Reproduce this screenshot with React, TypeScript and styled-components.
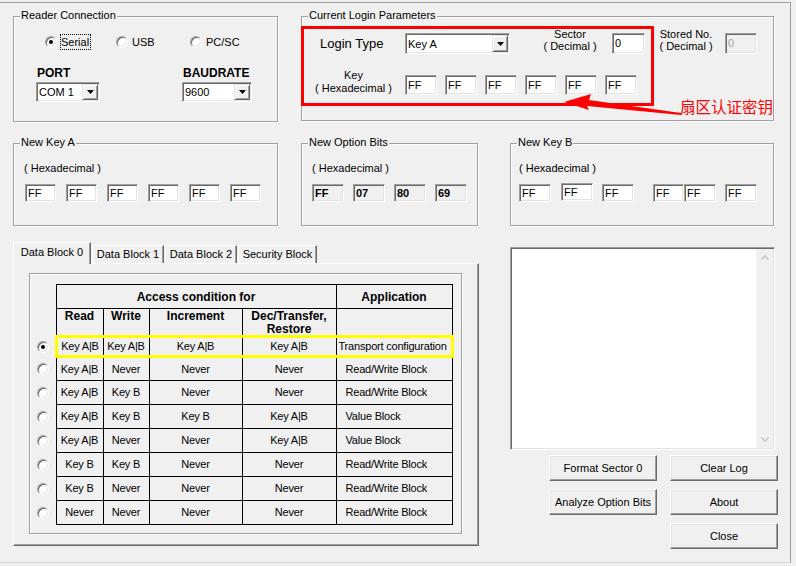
import React from "react";
import styled, { createGlobalStyle, css } from "styled-components";

const GlobalStyle = createGlobalStyle`
  html, body { margin: 0; padding: 0; background: #f0f0f0; }
  body { font-family: "Liberation Sans", Arial, sans-serif; font-size: 11px; color: #000; }
  *, *::before, *::after { box-sizing: border-box; }
`;

const Page = styled.div`
  width: 796px;
  height: 566px;
  padding-top: 2px;
  background: #f0f0f0;
  overflow: hidden;
`;

const Frame = styled.div`
  width: 791px;
  height: 561px;
  border-top: 1px solid #a0a0a0;
  border-right: 1px solid #a0a0a0;
  border-bottom: 1px solid #d8d8d8;
  padding: 13px 0 0 13px;
`;

const Row = styled.div<{ $mt?: number }>`
  display: flex;
  align-items: flex-start;
  margin-top: ${(p) => p.$mt ?? 0}px;
`;

const Group = styled.div<{ $w: number; $h: number; $ml?: number; $pl?: number }>`
  position: relative;
  flex: none;
  width: ${(p) => p.$w}px;
  height: ${(p) => p.$h}px;
  margin-left: ${(p) => p.$ml ?? 0}px;
  padding-left: ${(p) => p.$pl ?? 0}px;
  border: 1px solid #a0a0a0;
  box-shadow: inset 1px 1px 0 #fff, 1px 1px 0 #fff;
`;

const GroupTitle = styled.span`
  position: absolute;
  left: 6px;
  top: -8px;
  padding: 0 1px;
  background: #f0f0f0;
  line-height: 13px;
  white-space: nowrap;
`;

/* ---------- shared controls ---------- */

const TextBox = styled.div<{
  $w: number;
  $h: number;
  $ml?: number;
  $mt?: number;
  $disabled?: boolean;
  $bold?: boolean;
}>`
  flex: none;
  width: ${(p) => p.$w}px;
  height: ${(p) => p.$h}px;
  margin-left: ${(p) => p.$ml ?? 0}px;
  margin-top: ${(p) => p.$mt ?? 0}px;
  border: 1px solid;
  border-color: #a0a0a0 #fff #fff #a0a0a0;
  box-shadow: inset 1px 1px 0 #696969, inset -1px -1px 0 #e3e3e3;
  background: ${(p) => (p.$disabled ? "#f0f0f0" : "#fff")};
  color: ${(p) => (p.$disabled && !p.$bold ? "#a0a0a0" : "#000")};
  font-weight: ${(p) => (p.$bold ? 700 : 400)};
  padding-left: 2px;
  line-height: ${(p) => p.$h - 2}px;
  white-space: nowrap;
  overflow: hidden;
`;

const ComboBox = styled.div<{ $w: number; $h: number; $mt?: number }>`
  flex: none;
  display: flex;
  width: ${(p) => p.$w}px;
  height: ${(p) => p.$h}px;
  margin-top: ${(p) => p.$mt ?? 0}px;
  border: 1px solid;
  border-color: #a0a0a0 #fff #fff #a0a0a0;
  box-shadow: inset 1px 1px 0 #696969, inset -1px -1px 0 #e3e3e3;
  background: #fff;
  padding: 1px;
`;

const ComboValue = styled.span`
  flex: 1;
  padding-left: 1px;
  display: flex;
  align-items: center;
  white-space: nowrap;
`;

const DropButton = styled.span`
  flex: none;
  width: 16px;
  display: flex;
  align-items: center;
  justify-content: center;
  background: #f0f0f0;
  border: 1px solid;
  border-color: #e3e3e3 #696969 #696969 #e3e3e3;
  box-shadow: inset 1px 1px 0 #fff, inset -1px -1px 0 #a0a0a0;
`;

const Combo: React.FC<{ w: number; h: number; mt?: number; children: React.ReactNode }> = ({
  w,
  h,
  mt,
  children,
}) => (
  <ComboBox $w={w} $h={h} $mt={mt}>
    <ComboValue>{children}</ComboValue>
    <DropButton>
      <svg width="7" height="4" viewBox="0 0 7 4">
        <polygon points="0,0 7,0 3.5,4" fill="#000" />
      </svg>
    </DropButton>
  </ComboBox>
);

const RadioDot = styled.span<{ $checked?: boolean }>`
  display: block;
  position: relative;
  flex: none;
  width: 12px;
  height: 12px;
  border-radius: 50%;
  background: #fff;
  border: 1px solid;
  border-color: #a0a0a0 #fff #fff #a0a0a0;
  box-shadow: inset 1px 1px 0 #696969, inset -1px -1px 0 #e3e3e3;
  ${(p) =>
    p.$checked &&
    css`
      &::after {
        content: "";
        position: absolute;
        left: 3px;
        top: 3px;
        width: 4px;
        height: 4px;
        border-radius: 50%;
        background: #000;
      }
    `}
`;

/* ---------- reader connection ---------- */

const RadioRow = styled.div`
  display: flex;
  align-items: center;
  height: 17px;
  margin-top: 16px;
  padding-left: 31px;
`;

const RadioOption = styled.label<{ $w?: number }>`
  display: flex;
  align-items: center;
  gap: 3px;
  width: ${(p) => (p.$w ? `${p.$w}px` : "auto")};
`;

const OptionText = styled.span<{ $focused?: boolean }>`
  border: 1px dotted ${(p) => (p.$focused ? "#000" : "transparent")};
  line-height: 13px;
  padding: 1px 1px 0 0;
`;

const PortRow = styled.div`
  display: flex;
  margin-top: 16px;
  padding-left: 22px;
`;

const Field = styled.div<{ $w?: number }>`
  display: flex;
  flex-direction: column;
  align-items: flex-start;
  width: ${(p) => (p.$w ? `${p.$w}px` : "auto")};
`;

const BoldLabel = styled.span`
  font-size: 12px;
  font-weight: 700;
  line-height: 14px;
  margin: 0 0 2px 1px;
`;

/* ---------- login parameters ---------- */

const LoginRow = styled.div`
  display: flex;
  align-items: flex-start;
  height: 26px;
  margin-top: 11px;
`;

const LoginLabel = styled.span`
  flex: none;
  width: 103px;
  padding-left: 18px;
  margin-top: 8px;
  font-size: 13px;
  line-height: 16px;
`;

const StackLabel = styled.span<{ $w: number; $ml?: number; $lh?: number }>`
  flex: none;
  width: ${(p) => p.$w}px;
  margin-left: ${(p) => p.$ml ?? 0}px;
  text-align: center;
  line-height: ${(p) => p.$lh ?? 12}px;
  white-space: nowrap;
`;

const KeyRow = styled.div`
  display: flex;
  align-items: flex-end;
  margin-top: 15px;
`;

const RedFrame = styled.div`
  position: absolute;
  left: -1px;
  top: 9px;
  width: 353px;
  height: 80px;
  border: 3px solid #ff0000;
  pointer-events: none;
`;

const ArrowMark = styled.svg`
  position: absolute;
  left: 258px;
  top: 73px;
  overflow: visible;
  pointer-events: none;
`;

const Annotation = styled.span`
  position: absolute;
  left: 378px;
  top: 81px;
  color: #ff0000;
  font-family: "Noto Sans CJK SC", "Liberation Sans", sans-serif;
  font-size: 15.5px;
  line-height: 16px;
  white-space: nowrap;
`;

/* ---------- option rows ---------- */

const HexCaption = styled.div`
  margin-top: 18px;
  line-height: 13px;
  white-space: nowrap;
`;

const BoxRow = styled.div<{ $ml?: number }>`
  display: flex;
  align-items: flex-start;
  margin-top: 9px;
  margin-left: ${(p) => p.$ml ?? 0}px;
`;

/* ---------- tabs ---------- */

const TabControl = styled.div`
  flex: none;
  width: 466px;
`;

const TabStrip = styled.div`
  display: flex;
  align-items: flex-end;
  height: 21px;
`;

const Tab = styled.div<{ $active?: boolean; $w: number }>`
  position: relative;
  z-index: ${(p) => (p.$active ? 2 : 1)};
  flex: none;
  width: ${(p) => p.$w}px;
  height: ${(p) => (p.$active ? 22 : 18)}px;
  margin-left: ${(p) => (p.$active ? 0 : 1)}px;
  margin-bottom: ${(p) => (p.$active ? -1 : 0)}px;
  padding-top: ${(p) => (p.$active ? 3 : 2)}px;
  background: #f0f0f0;
  border: 1px solid;
  border-bottom: none;
  border-color: #fff #696969 transparent #fff;
  box-shadow: inset -1px 0 0 #a0a0a0;
  text-align: center;
  line-height: 13px;
  white-space: nowrap;
`;

const TabPanel = styled.div`
  position: relative;
  z-index: 1;
  width: 466px;
  height: 283px;
  border: 1px solid;
  border-color: #fff #696969 #696969 #fff;
  box-shadow: inset -1px -1px 0 #a0a0a0;
  padding: 9px 0 0 15px;
`;

const InnerFrame = styled.div`
  width: 433px;
  height: 261px;
  border: 1px solid #a0a0a0;
  box-shadow: inset 1px 1px 0 #fff, 1px 1px 0 #fff;
  padding: 10px 0 0 6px;
`;

const AccessTable = styled.table`
  border-collapse: collapse;
  table-layout: fixed;
  width: 416px;
`;

const Col = styled.col<{ $w: number }>`
  width: ${(p) => p.$w}px;
`;

const HeadRow = styled.tr<{ $h: number }>`
  height: ${(p) => p.$h}px;
`;

const HeadCell = styled.th<{ $top?: boolean }>`
  border: 1px solid #000;
  padding: 0;
  font-size: 12px;
  font-weight: 700;
  line-height: 12px;
  text-align: center;
  vertical-align: ${(p) => (p.$top ? "top" : "middle")};
  white-space: nowrap;
`;

const HeadLine = styled.span`
  display: block;
  height: 12px;
  margin-top: 1px;
`;

const RadioCell = styled.td`
  border: none;
  padding: 0 0 0 1px;
  vertical-align: middle;
`;

const Cell = styled.td<{ $left?: number }>`
  border: 1px solid #000;
  padding: 0 0 0 ${(p) => p.$left ?? 0}px;
  text-align: ${(p) => (p.$left !== undefined ? "left" : "center")};
  vertical-align: middle;
  white-space: nowrap;
  overflow: hidden;
  letter-spacing: -0.2px;
  line-height: 13px;
`;

const DataRow = styled.tr<{ $h: number; $hl?: boolean }>`
  height: ${(p) => p.$h}px;
  ${(p) =>
    p.$hl &&
    css`
      & > td:not(:first-child) {
        border-top: 3px solid #ffff00;
        border-bottom: 3px solid #ffff00;
      }
      & > td:nth-child(2) {
        border-left: 3px solid #ffff00;
      }
      & > td:last-child {
        border-right: 3px solid #ffff00;
      }
    `}
`;

/* ---------- side column ---------- */

const SideColumn = styled.div`
  flex: none;
  width: 268px;
  margin-left: 31px;
`;

const LogBox = styled.div`
  display: flex;
  width: 265px;
  height: 203px;
  margin-top: 5px;
  border: 1px solid;
  border-color: #a0a0a0 #fff #fff #a0a0a0;
  box-shadow: inset 1px 1px 0 #696969, inset -1px -1px 0 #e3e3e3;
  background: #fff;
  padding: 1px;
`;

const LogText = styled.div`
  flex: 1;
`;

const ScrollTrack = styled.div`
  flex: none;
  width: 17px;
  background: #f0f0f0;
  display: flex;
  flex-direction: column;
  justify-content: space-between;
`;

const ScrollArrow = styled.div`
  height: 17px;
  display: flex;
  align-items: center;
  justify-content: center;
`;

const ButtonGrid = styled.div`
  display: grid;
  grid-template-columns: 108px 108px;
  column-gap: 13px;
  row-gap: 8px;
  justify-content: end;
  margin-top: 5px;
`;

const Button = styled.button<{ $col?: number }>`
  grid-column: ${(p) => p.$col ?? "auto"};
  height: 26px;
  margin: 0;
  padding: 0;
  font: inherit;
  color: #000;
  background: #f0f0f0;
  border: 1px solid;
  border-color: #fff #696969 #696969 #fff;
  box-shadow: inset -1px -1px 0 #a0a0a0, inset 1px 1px 0 #e3e3e3;
  white-space: nowrap;
`;

/* ---------- data ---------- */

const rows: string[][] = [
  ["Key A|B", "Key A|B", "Key A|B", "Key A|B", "Transport configuration"],
  ["Key A|B", "Never", "Never", "Never", "Read/Write Block"],
  ["Key A|B", "Key B", "Never", "Never", "Read/Write Block"],
  ["Key A|B", "Key B", "Key B", "Key A|B", "Value Block"],
  ["Key A|B", "Never", "Never", "Key A|B", "Value Block"],
  ["Key B", "Key B", "Never", "Never", "Read/Write Block"],
  ["Key B", "Never", "Never", "Never", "Read/Write Block"],
  ["Never", "Never", "Never", "Never", "Read/Write Block"],
];

const keyB = [
  { w: 32, ml: 0, mt: 0 },
  { w: 32, ml: 10, mt: -1 },
  { w: 32, ml: 9, mt: 0 },
  { w: 31, ml: 19, mt: 0 },
  { w: 32, ml: 0, mt: 0 },
  { w: 32, ml: 9, mt: 0 },
];

const optionBits = ["FF", "07", "80", "69"];

const Chevron: React.FC<{ up?: boolean }> = ({ up }) => (
  <svg width="8" height="5" viewBox="0 0 8 5">
    <polyline
      points={up ? "0.5,4.5 4,1 7.5,4.5" : "0.5,0.5 4,4 7.5,0.5"}
      fill="none"
      stroke="#c4c4c4"
      strokeWidth="1.4"
    />
  </svg>
);

export default function App() {
  return (
    <Page>
      <GlobalStyle />
      <Frame>
        <Row>
          <Group $w={265} $h={106}>
            <GroupTitle>Reader Connection</GroupTitle>
            <RadioRow>
              <RadioOption $w={71}>
                <RadioDot $checked />
                <OptionText $focused>Serial</OptionText>
              </RadioOption>
              <RadioOption $w={74}>
                <RadioDot />
                <OptionText>USB</OptionText>
              </RadioOption>
              <RadioOption>
                <RadioDot />
                <OptionText>PC/SC</OptionText>
              </RadioOption>
            </RadioRow>
            <PortRow>
              <Field $w={146}>
                <BoldLabel>PORT</BoldLabel>
                <Combo w={64} h={20}>COM 1</Combo>
              </Field>
              <Field>
                <BoldLabel>BAUDRATE</BoldLabel>
                <Combo w={70} h={20}>9600</Combo>
              </Field>
            </PortRow>
          </Group>

          <Group $w={473} $h={105} $ml={23}>
            <GroupTitle>Current Login Parameters</GroupTitle>
            <LoginRow>
              <LoginLabel>Login Type</LoginLabel>
              <Combo w={105} h={21} mt={5}>Key A</Combo>
              <StackLabel $w={84} $ml={18}>
                Sector
                <br />( Decimal )
              </StackLabel>
              <TextBox $w={33} $h={21} $mt={5}>0</TextBox>
              <StackLabel $w={78} $ml={2}>
                Stored No.
                <br />( Decimal )
              </StackLabel>
              <TextBox $w={32} $h={21} $mt={5} $disabled>0</TextBox>
            </LoginRow>
            <KeyRow>
              <StackLabel $w={103} $lh={13}>
                Key
                <br />( Hexadecimal )
              </StackLabel>
              {[0, 1, 2, 3, 4, 5].map((i) => (
                <TextBox key={i} $w={32} $h={20} $ml={i ? 8 : 0}>FF</TextBox>
              ))}
            </KeyRow>
            <RedFrame />
            <ArrowMark width="124" height="26" viewBox="0 0 124 26">
              <polygon
                points="4,12 31,4 29,10 121,23 121,25 27,16 29,20"
                fill="#ff0000"
              />
            </ArrowMark>
            <Annotation>扇区认证密钥</Annotation>
          </Group>
        </Row>

        <Row $mt={21}>
          <Group $w={265} $h={83} $pl={10}>
            <GroupTitle>New Key A</GroupTitle>
            <HexCaption>( Hexadecimal )</HexCaption>
            <BoxRow $ml={1}>
              {[0, 1, 2, 3, 4, 5].map((i) => (
                <TextBox key={i} $w={31} $h={18} $ml={i ? 10 : 0}>FF</TextBox>
              ))}
            </BoxRow>
          </Group>

          <Group $w={177} $h={83} $ml={23} $pl={10}>
            <GroupTitle>New Option Bits</GroupTitle>
            <HexCaption>( Hexadecimal )</HexCaption>
            <BoxRow>
              {optionBits.map((v, i) => (
                <TextBox key={v} $w={32} $h={18} $ml={i ? 9 : 0} $disabled $bold>
                  {v}
                </TextBox>
              ))}
            </BoxRow>
          </Group>

          <Group $w={264} $h={83} $ml={32} $pl={8}>
            <GroupTitle>New Key B</GroupTitle>
            <HexCaption>( Hexadecimal )</HexCaption>
            <BoxRow>
              {keyB.map((b, i) => (
                <TextBox key={i} $w={b.w} $h={18} $ml={b.ml} $mt={b.mt}>FF</TextBox>
              ))}
            </BoxRow>
          </Group>
        </Row>

        <Row $mt={16}>
          <TabControl>
            <TabStrip>
              <Tab $active $w={78}>Data Block 0</Tab>
              <Tab $w={72}>Data Block 1</Tab>
              <Tab $w={72}>Data Block 2</Tab>
              <Tab $w={79}>Security Block</Tab>
            </TabStrip>
            <TabPanel>
              <InnerFrame>
                <AccessTable>
                  <colgroup>
                    <Col $w={20} />
                    <Col $w={47} />
                    <Col $w={46} />
                    <Col $w={93} />
                    <Col $w={94} />
                    <Col $w={116} />
                  </colgroup>
                  <thead>
                    <HeadRow $h={24}>
                      <RadioCell />
                      <HeadCell colSpan={4}>Access condition for</HeadCell>
                      <HeadCell>Application</HeadCell>
                    </HeadRow>
                    <HeadRow $h={26}>
                      <RadioCell />
                      <HeadCell $top>
                        <HeadLine>Read</HeadLine>
                      </HeadCell>
                      <HeadCell $top>
                        <HeadLine>Write</HeadLine>
                      </HeadCell>
                      <HeadCell $top>
                        <HeadLine>Increment</HeadLine>
                      </HeadCell>
                      <HeadCell $top>
                        <HeadLine>Dec/Transfer,</HeadLine>
                        <HeadLine>Restore</HeadLine>
                      </HeadCell>
                      <HeadCell $top />
                    </HeadRow>
                  </thead>
                  <tbody>
                    {rows.map((r, i) => (
                      <DataRow key={i} $h={i === 0 ? 20 : 24} $hl={i === 0}>
                        <RadioCell>
                          <RadioDot $checked={i === 0} />
                        </RadioCell>
                        <Cell>{r[0]}</Cell>
                        <Cell>{r[1]}</Cell>
                        <Cell>{r[2]}</Cell>
                        <Cell>{r[3]}</Cell>
                        <Cell $left={i === 0 ? 2 : 9}>{r[4]}</Cell>
                      </DataRow>
                    ))}
                  </tbody>
                </AccessTable>
              </InnerFrame>
            </TabPanel>
          </TabControl>

          <SideColumn>
            <LogBox>
              <LogText />
              <ScrollTrack>
                <ScrollArrow>
                  <Chevron up />
                </ScrollArrow>
                <ScrollArrow>
                  <Chevron />
                </ScrollArrow>
              </ScrollTrack>
            </LogBox>
            <ButtonGrid>
              <Button>Format Sector 0</Button>
              <Button>Clear Log</Button>
              <Button>Analyze Option Bits</Button>
              <Button>About</Button>
              <Button $col={2}>Close</Button>
            </ButtonGrid>
          </SideColumn>
        </Row>
      </Frame>
    </Page>
  );
}
